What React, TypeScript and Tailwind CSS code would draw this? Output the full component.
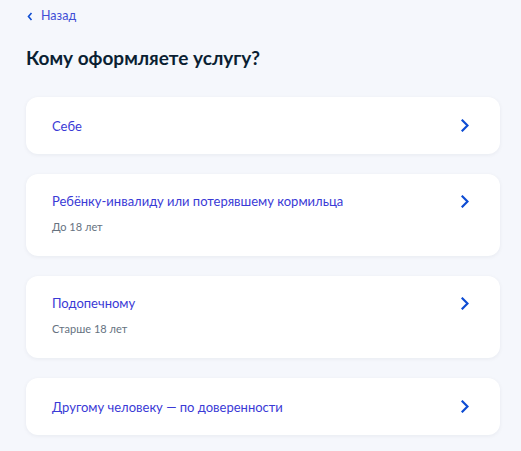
const options = [
  { title: "Себе" },
  { title: "Ребёнку-инвалиду или потерявшему кормильца", note: "До 18 лет" },
  { title: "Подопечному", note: "Старше 18 лет" },
  { title: "Другому человеку — по доверенности" },
];

function Chevron() {
  return (
    <svg width="8" height="13" viewBox="0 0 8 13" fill="none" className="shrink-0">
      <path d="M1.5 1.5 6.5 6.5 1.5 11.5" stroke="#0d4cd3" strokeWidth="2.2" strokeLinecap="square" />
    </svg>
  );
}

export default function App() {
  return (
    <div className="min-h-[451px] bg-[#f5f7fc] px-[26px] pt-[8px] font-['Lato','Open_Sans',sans-serif]">
      <a className="flex h-[17px] items-center gap-[8px] text-[12.5px] text-[#3f4ed6]">
        <svg width="6" height="9" viewBox="0 0 6 9" fill="none" className="ml-[1px]">
          <path d="M4.5 1 1.5 4.5 4.5 8" stroke="#0d4cd3" strokeWidth="1.6" />
        </svg>
        Назад
      </a>
      <h1 className="mt-[21px] text-[19px] font-bold leading-[24px] text-[#0b1f33]">
        Кому оформляете услугу?
      </h1>
      <div className="mt-[27px] flex w-[474px] flex-col gap-[20px]">
        {options.map((o) => (
          <button
            key={o.title}
            className="flex items-center justify-between rounded-[12px] bg-white pl-[26px] pr-[31px] text-left shadow-[0_1px_4px_rgba(11,31,51,0.06)]"
            style={{ minHeight: o.note ? 82 : 57 }}
          >
            <div className={o.note ? "self-start pt-[18px] pb-[20px]" : ""}>
              <div className="text-[13px] leading-[18px] text-[#3a3ad6]">{o.title}</div>
              {o.note && (
                <div className="mt-[10px] text-[11px] leading-[14px] text-[#66727f]">{o.note}</div>
              )}
            </div>
            <div className={o.note ? "self-start pt-[21px]" : ""}>
              <Chevron />
            </div>
          </button>
        ))}
      </div>
    </div>
  );
}
